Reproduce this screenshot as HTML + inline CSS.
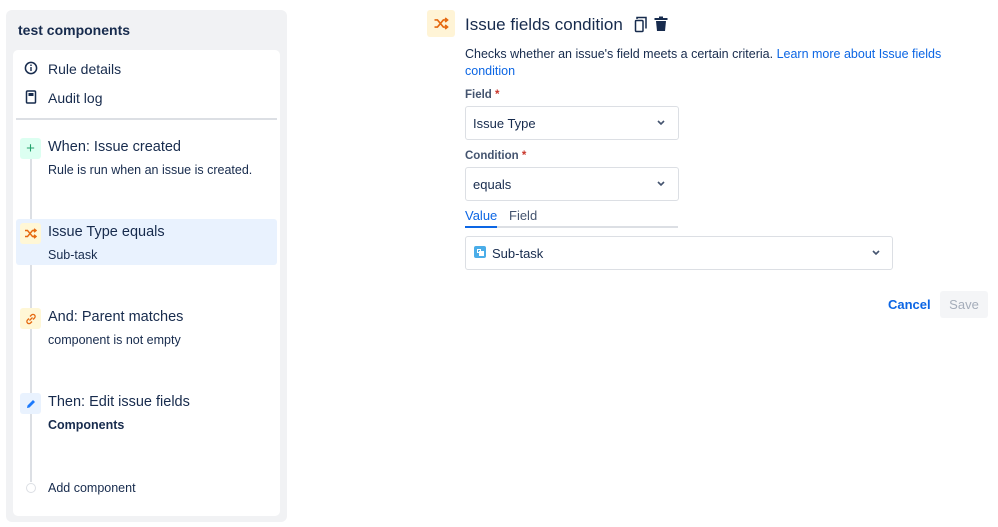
<!DOCTYPE html>
<html><head><meta charset="utf-8"><style>
*{box-sizing:border-box;margin:0;padding:0}
body{width:998px;height:527px;background:#fff;font-family:"Liberation Sans",Arial,sans-serif;color:#172b4d;position:relative;overflow:hidden}
.a{position:absolute;white-space:nowrap}
.outer{position:absolute;left:6px;top:10px;width:281px;height:512px;background:#f1f2f4;border-radius:6px}
.inner{position:absolute;left:13px;top:50px;width:267px;height:466px;background:#fff;border-radius:5px}
.t{font-size:14px;line-height:16px}
.h{font-size:14.5px;line-height:16px}
.s{font-size:12.5px;line-height:16px}
.ib{position:absolute;left:20px;width:21px;height:21px;border-radius:3px;display:flex;align-items:center;justify-content:center}
.sel{position:absolute;border:1.5px solid #dcdfe4;border-radius:3px;background:#fff}
.lbl{font-size:11.5px;font-weight:bold;color:#44546f}
.req{color:#c9372c}
</style></head><body>
<div class="outer"></div>
<div class="inner"></div>
<div class="a" style="left:18px;top:22px;font-size:14px;font-weight:bold">test components</div>
<svg class="a" style="left:24px;top:61px" width="14" height="14" viewBox="0 0 14 14"><circle cx="7" cy="7" r="5.6" fill="none" stroke="#172b4d" stroke-width="1.5"/><rect x="6.3" y="6" width="1.4" height="4" fill="#172b4d"/><circle cx="7" cy="4.2" r=".85" fill="#172b4d"/></svg>
<div class="a t" style="left:48px;top:61px">Rule details</div>
<svg class="a" style="left:25px;top:90px" width="12" height="14" viewBox="0 0 12 14"><rect x="1.5" y="1" width="9" height="12" rx="1" fill="none" stroke="#172b4d" stroke-width="1.5"/><rect x="3.5" y="3" width="5" height="3" fill="#172b4d"/></svg>
<div class="a t" style="left:48px;top:90px">Audit log</div>
<div class="a" style="left:16px;top:118px;width:261px;height:2px;background:#dcdfe4"></div>
<div class="a" style="left:30px;top:158px;width:2px;height:324px;background:#dcdfe4"></div>
<div class="a" style="left:16px;top:219px;width:261px;height:46px;background:#e9f2fe;border-radius:3px"></div>
<div class="ib" style="top:138px;background:#dcfff1;color:#22a06b;font-size:15px">+</div>
<div class="a h" style="left:48px;top:139px">When: Issue created</div>
<div class="a s" style="left:48px;top:162px">Rule is run when an issue is created.</div>
<div class="ib" style="top:223px;background:#fff7d6"><svg width="13" height="11" viewBox="0 0 13 11"><path d="M1 2.5h2.5l5 6H12M1 8.5h2.5l5-6H12M10 .8l2 1.7-2 1.7M10 6.8l2 1.7-2 1.7" fill="none" stroke="#e56910" stroke-width="1.4"/></svg></div>
<div class="a h" style="left:48px;top:224px">Issue Type equals</div>
<div class="a s" style="left:48px;top:247px">Sub-task</div>
<div class="ib" style="top:308px;background:#fff7d6"><svg width="12" height="12" viewBox="0 0 12 12"><path d="M5 3.5l1.5-1.5a2 2 0 013 3L8 6.5M7 8.5L5.5 10a2 2 0 01-3-3L4 5.5M4.5 7.5l3-3" fill="none" stroke="#e56910" stroke-width="1.3"/></svg></div>
<div class="a h" style="left:48px;top:309px">And: Parent matches</div>
<div class="a s" style="left:48px;top:332px">component is not empty</div>
<div class="ib" style="top:393px;background:#e9f2fe"><svg width="12" height="12" viewBox="0 0 12 12"><path d="M2 10l.5-2.5L8 2l2 2-5.5 5.5z" fill="#1d7afc"/></svg></div>
<div class="a h" style="left:48px;top:394px">Then: Edit issue fields</div>
<div class="a s" style="left:48px;top:417px;font-weight:bold">Components</div>
<div class="a" style="left:26px;top:483px;width:10px;height:10px;border:1.5px solid #dcdfe4;border-radius:50%;background:#fff"></div>
<div class="a s" style="left:48px;top:480px">Add component</div>

<div class="a" style="left:427px;top:10px;width:28px;height:27px;background:#fff4d6;border-radius:3px;display:flex;align-items:center;justify-content:center"><svg width="16" height="13" viewBox="0 0 13 11"><path d="M1 2.5h2.5l5 6H12M1 8.5h2.5l5-6H12M10 .8l2 1.7-2 1.7M10 6.8l2 1.7-2 1.7" fill="none" stroke="#e56910" stroke-width="1.4"/></svg></div>
<div class="a" style="left:465px;top:14px;font-size:17px;line-height:22px">Issue fields condition</div>
<svg class="a" style="left:634px;top:16px" width="14" height="17" viewBox="0 0 14 17"><path d="M3 3V1.5h9v11" fill="none" stroke="#172b4d" stroke-width="1.5"/><rect x="1.5" y="4.5" width="7.5" height="11" rx="1" fill="none" stroke="#172b4d" stroke-width="1.5"/></svg>
<svg class="a" style="left:654px;top:16px" width="14" height="16" viewBox="0 0 14 16"><rect x="0.5" y="2" width="13" height="2" fill="#172b4d"/><rect x="5" y="0.5" width="4" height="2" fill="#172b4d"/><path d="M2 5h10l-1 10H3z" fill="#172b4d"/></svg>
<div class="a" style="left:465px;top:46px;font-size:12.5px;line-height:17px">Checks whether an issue's field meets a certain criteria. <span style="color:#0c66e4">Learn more about Issue fields</span><br><span style="color:#0c66e4">condition</span></div>
<div class="a lbl" style="left:465px;top:89px">Field <span class="req">*</span></div>
<div class="sel" style="left:465px;top:106px;width:214px;height:34px"></div>
<div class="a" style="left:473px;top:116px;font-size:13px">Issue Type</div>
<svg class="a" style="left:656px;top:119px" width="10" height="7" viewBox="0 0 10 7"><path d="M2 2l3 3 3-3" fill="none" stroke="#44546f" stroke-width="1.6"/></svg>
<div class="a lbl" style="left:465px;top:150px">Condition <span class="req">*</span></div>
<div class="sel" style="left:465px;top:167px;width:214px;height:34px"></div>
<div class="a" style="left:473px;top:177px;font-size:13px">equals</div>
<svg class="a" style="left:656px;top:180px" width="10" height="7" viewBox="0 0 10 7"><path d="M2 2l3 3 3-3" fill="none" stroke="#44546f" stroke-width="1.6"/></svg>
<div class="a" style="left:465px;top:208px;font-size:13px;color:#0c66e4">Value</div>
<div class="a" style="left:509px;top:208px;font-size:13px;color:#44546f;font-weight:500">Field</div>
<div class="a" style="left:465px;top:226px;width:213px;height:2px;background:#dcdfe4"></div>
<div class="a" style="left:465px;top:226px;width:32px;height:2px;background:#0c66e4"></div>
<div class="sel" style="left:465px;top:236px;width:428px;height:34px"></div>
<div class="a" style="left:474px;top:246px;width:12px;height:12px;background:#4bade8;border-radius:2px"><div style="position:absolute;left:3px;top:3px;width:4px;height:4px;border:1px solid #fff"></div><div style="position:absolute;left:5px;top:5px;width:5px;height:5px;background:#fff"></div></div>
<div class="a" style="left:492px;top:246px;font-size:13px">Sub-task</div>
<svg class="a" style="left:871px;top:249px" width="10" height="7" viewBox="0 0 10 7"><path d="M2 2l3 3 3-3" fill="none" stroke="#44546f" stroke-width="1.6"/></svg>
<div class="a" style="left:888px;top:297px;font-size:13px;font-weight:bold;color:#0c66e4">Cancel</div>
<div class="a" style="left:940px;top:291px;width:48px;height:27px;background:#f4f5f7;border-radius:3px;color:#a5adba;font-size:13px;text-align:center;line-height:27px">Save</div>
</body></html>
